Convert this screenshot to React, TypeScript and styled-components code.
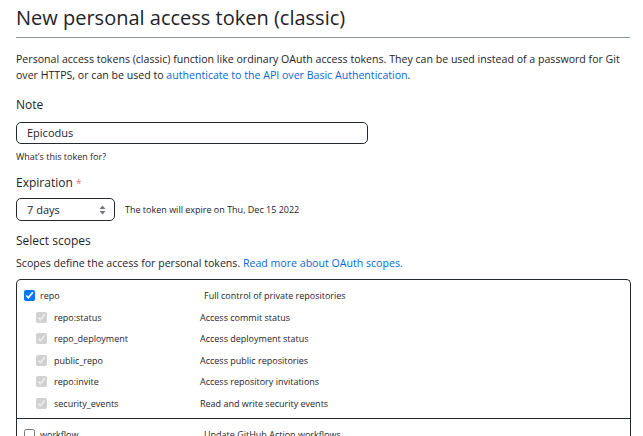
import styled, { createGlobalStyle } from "styled-components"

const GlobalStyle = createGlobalStyle`
  body {
    margin: 0;
    background: #fff;
    color: #1f2328;
    font-family: "Open Sans", "Noto Sans", sans-serif;
  }
`

const Page = styled.div`
  width: 614px;
  padding: 0 0 0 16px;
`
const Title = styled.h2`
  margin: 0;
  padding-top: 5px;
  height: 32px;
  font-size: 20px;
  font-weight: 400;
  line-height: 26px;
  border-bottom: 1px solid #8c959f;
`
const Intro = styled.p<{ $top?: number }>`
  margin: ${p => p.$top ?? 13}px 0 0;
  font-size: 10.6px;
  line-height: 16px;
`
const Link = styled.a`
  color: #0969da;
  text-decoration: none;
`
const Label = styled.div<{ $top?: number }>`
  margin-top: ${p => p.$top ?? 14}px;
  font-size: 12px;
  line-height: 16px;
`
const Required = styled.span`
  color: #e0737a;
  font-size: 10px;
`
const TextInput = styled.div`
  box-sizing: border-box;
  margin-top: 9px;
  width: 352px;
  height: 22px;
  padding: 0 10px;
  border: 1px solid #24292f;
  border-radius: 5px;
  font-size: 11px;
  line-height: 20px;
`
const Hint = styled.div`
  margin-top: 6px;
  font-size: 9px;
  line-height: 14px;
`
const ExpRow = styled.div`
  display: flex;
  align-items: center;
  gap: 10px;
  margin-top: 7px;
`
const Select = styled.div`
  box-sizing: border-box;
  display: flex;
  align-items: center;
  justify-content: space-between;
  width: 99px;
  height: 23px;
  padding: 0 8px 0 10px;
  border: 1px solid #24292f;
  border-radius: 5px;
  font-size: 11px;
`
const Note = styled.span`
  font-size: 9px;
`
const ScopeBox = styled.div`
  box-sizing: border-box;
  margin-top: 8px;
  width: 615px;
  border: 1px solid #24292f;
  border-bottom: none;
  border-radius: 5px 5px 0 0;
`
const Group = styled.div`
  padding: 5px 0 4px 7px;
  & + & {
    border-top: 1px solid #24292f;
  }
`
const Row = styled.div<{ $sub?: boolean }>`
  display: grid;
  grid-template-columns: ${p => (p.$sub ? "164px 1fr" : "180px 1fr")};
  align-items: center;
  height: 21.5px;
  padding-left: ${p => (p.$sub ? "12px" : "0")};
  font-size: 9px;
`
const Name = styled.label<{ $sub?: boolean }>`
  display: flex;
  align-items: center;
  gap: ${p => (p.$sub ? "7px" : "5px")};
`
const Box = styled.input`
  width: 11px;
  height: 11px;
  margin: 0;
  accent-color: #0075ff;
`

const scopes = [
  { name: "repo", desc: "Full control of private repositories", children: [
    ["repo:status", "Access commit status"],
    ["repo_deployment", "Access deployment status"],
    ["public_repo", "Access public repositories"],
    ["repo:invite", "Access repository invitations"],
    ["security_events", "Read and write security events"],
  ], checked: true },
  { name: "workflow", desc: "Update GitHub Action workflows", children: [], checked: false },
]

const Arrows = () => (
  <svg width="7" height="10" viewBox="0 0 7 10">
    <path d="M3.5 0.5L6.5 4H0.5z M3.5 9.5L0.5 6H6.5z" fill="#6e7781" />
  </svg>
)

export default function App() {
  return (
    <Page>
      <GlobalStyle />
      <Title>New personal access token (classic)</Title>
      <Intro>
        Personal access tokens (classic) function like ordinary OAuth access tokens. They can be used instead of a password for Git
        over HTTPS, or can be used to <Link>authenticate to the API over Basic Authentication</Link>.
      </Intro>
      <Label>Note</Label>
      <TextInput>Epicodus</TextInput>
      <Hint>What’s this token for?</Hint>
      <Label $top={11}>Expiration <Required>*</Required></Label>
      <ExpRow>
        <Select>
          7 days
          <Arrows />
        </Select>
        <Note>The token will expire on Thu, Dec 15 2022</Note>
      </ExpRow>
      <Label $top={12}>Select scopes</Label>
      <Intro $top={6}>
        Scopes define the access for personal tokens. <Link>Read more about OAuth scopes.</Link>
      </Intro>
      <ScopeBox>
        {scopes.map(s => (
          <Group key={s.name}>
            <Row>
              <Name><Box type="checkbox" defaultChecked={s.checked} />{s.name}</Name>
              <span>{s.desc}</span>
            </Row>
            {s.children.map(([n, d]) => (
              <Row $sub key={n}>
                <Name $sub><Box type="checkbox" defaultChecked disabled />{n}</Name>
                <span>{d}</span>
              </Row>
            ))}
          </Group>
        ))}
      </ScopeBox>
    </Page>
  )
}
